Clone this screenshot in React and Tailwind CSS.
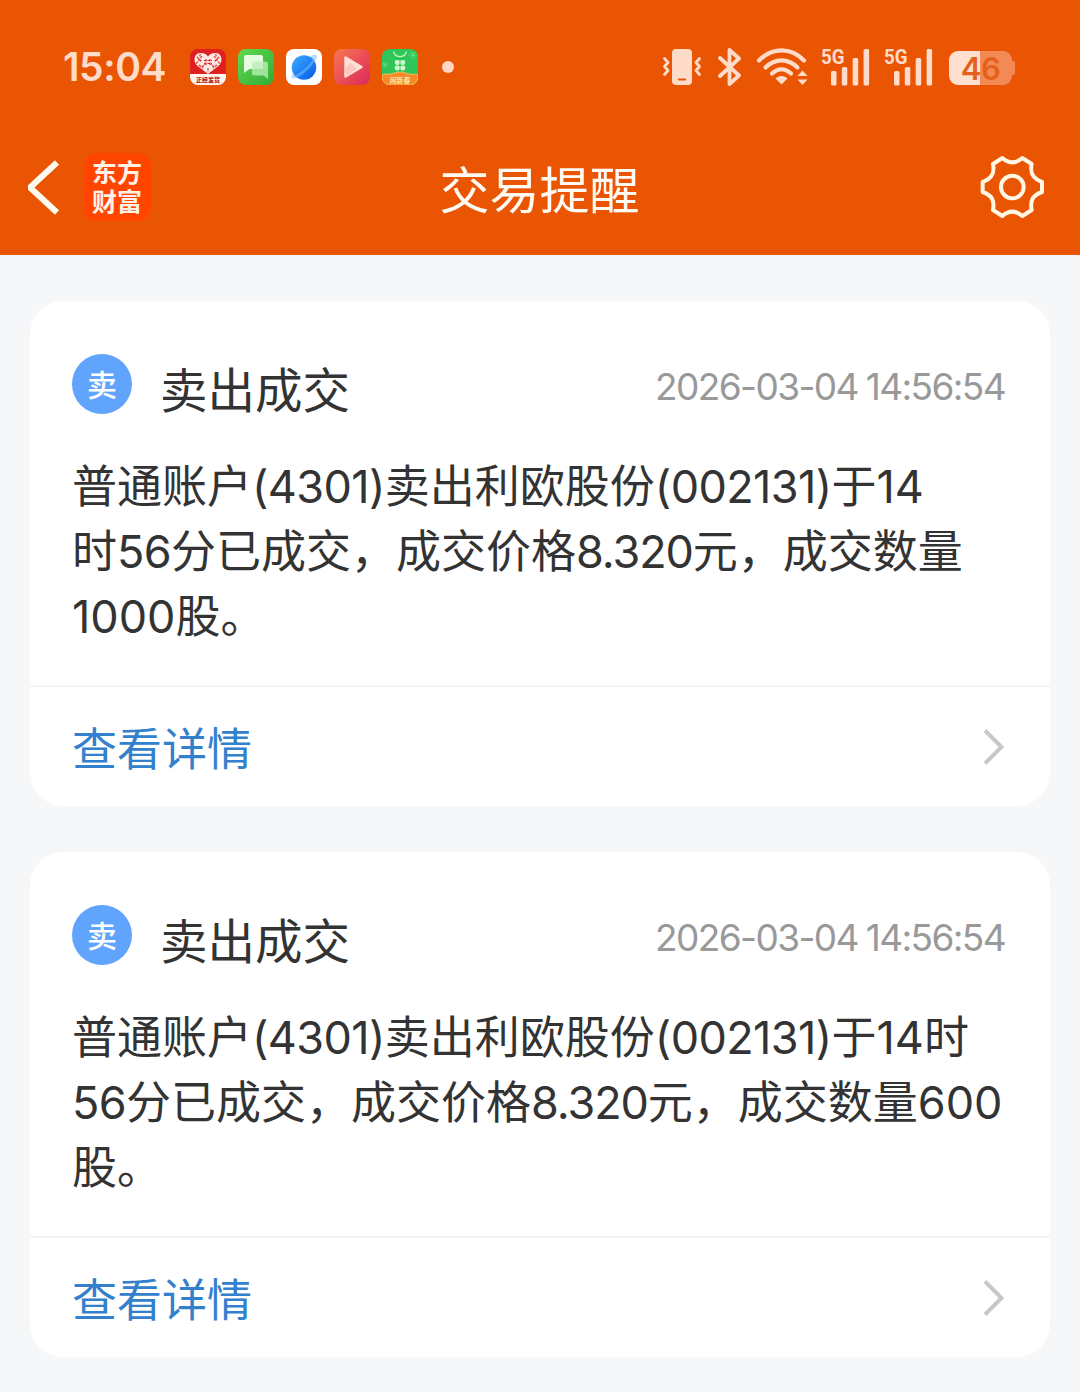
const notices = [
  {
    id: 1,
    title: "卖出成交",
    time: "2026-03-04 14:56:54",
    lines: [
      "普通账户(4301)卖出利欧股份(002131)于14",
      "时56分已成交，成交价格8.320元，成交数量",
      "1000股。",
    ],
  },
  {
    id: 2,
    title: "卖出成交",
    time: "2026-03-04 14:56:54",
    lines: [
      "普通账户(4301)卖出利欧股份(002131)于14时",
      "56分已成交，成交价格8.320元，成交数量600",
      "股。",
    ],
  },
];

export default function App() {
  return (
    <div className="h-[1392px] w-[1080px] overflow-hidden bg-[#f6f7f9] font-['Inter','Noto_Sans_CJK_SC',sans-serif]">
      <header className="h-[255px] bg-[#ea5504]">
        <StatusBar />
        <NavBar />
      </header>

      <main className="flex flex-col gap-[46px] px-[30px] pt-[46px]">
        {notices.map((notice) => (
          <NoticeCard key={notice.id} notice={notice} />
        ))}
      </main>
    </div>
  );
}

function StatusBar() {
  return (
    <div className="flex h-[134px] items-center pl-[63px] pr-[65px] text-[#ffdcc9]">
      <span className="w-[127px] pb-0.5 text-[39px] leading-none font-semibold tracking-[-0.4px]">15:04</span>
      <div className="flex items-center gap-3">
        <HeartAppIcon />
        <ChatAppIcon />
        <PlanetAppIcon />
        <VideoAppIcon />
        <CloverAppIcon />
      </div>
      <span className="ml-6 h-3 w-3 rounded-full bg-[#ffd6c3]" />

      <div className="ml-auto flex items-center">
        <VibrateIcon />
        <BluetoothIcon />
        <WifiIcon />
        <SignalIcon />
        <SignalIcon />
        <Battery />
      </div>
    </div>
  );
}

function HeartAppIcon() {
  return (
    <svg className="h-9 w-9" viewBox="0 0 36 36">
      <rect width="36" height="36" rx="8" fill="#e02020" />
      <path d="M0 25h36v3a8 8 0 01-8 8H8a8 8 0 01-8-8z" fill="#fff6f0" />
      <path
        d="M18 25L6.500 16C3 12 4 4 10.500 4 14 4 16.500 5 18 7.500 19.500 5 22 4 25.500 4 32 4 33 12 29.500 16z"
        fill="#ffe9e4"
      />
      <path
        d="M7 8l5 5M12 7l-6 8M29 8l-5 5M24 7l6 8M12 18l3-3M24 18l-3-3M18 19v4M16 10v6M20 10v6M14 11.500h8M14 14.500h8M9 16l4 3M27 16l-4 3M10 5v3M26 5v3"
        fill="none"
        stroke="#e02020"
        strokeWidth="1.100"
        strokeDasharray="2.500 1"
      />
      <text x="18" y="33" textAnchor="middle" fontSize="6" fontWeight="800" fill="#b52318">
        正经发货
      </text>
    </svg>
  );
}

function ChatAppIcon() {
  return (
    <svg className="h-9 w-9" viewBox="0 0 36 36">
      <defs>
        <linearGradient id="chat" x1="0" y1="0" x2="1" y2="1">
          <stop stopColor="#61d94e" />
          <stop offset="1" stopColor="#30ac36" />
        </linearGradient>
      </defs>
      <rect width="36" height="36" rx="8" fill="url(#chat)" />
      <path d="M16 12.500h12a2 2 0 012 2V30l-4.500-3.500H16a2 2 0 01-2-2v-10a2 2 0 012-2z" fill="#a0e39a" />
      <path d="M8 6h15a2 2 0 012 2v10a2 2 0 01-2 2H11.500L6 24V8a2 2 0 012-2z" fill="#e5fae0" />
      <path d="M14 14.500a2 2 0 012-2h9V18a2 2 0 01-2 2h-9z" fill="#c5efbf" />
    </svg>
  );
}

function PlanetAppIcon() {
  return (
    <svg className="h-9 w-9" viewBox="0 0 36 36">
      <defs>
        <linearGradient id="planet" x1="0" y1="0" x2="1" y2="1">
          <stop stopColor="#3cacff" />
          <stop offset="1" stopColor="#0759e8" />
        </linearGradient>
      </defs>
      <rect width="36" height="36" rx="8" fill="#fff" />
      <path d="M24 8C27 5 30 5 31 7 32.500 11 12 31 7 29.500 4.500 29 5.500 26 8 23z" fill="#b4dcff" />
      <circle cx="18" cy="18.500" r="12.200" fill="url(#planet)" />
      <path d="M28.500 12C26 17 18 25 11 28.500L9 27C16 23 24 15 27 10.500z" fill="#6dbcff" opacity=".6" />
    </svg>
  );
}

function VideoAppIcon() {
  return (
    <svg className="h-9 w-9" viewBox="0 0 36 36">
      <defs>
        <linearGradient id="video" x1="0" y1="0" x2="1" y2="1">
          <stop stopColor="#f87852" />
          <stop offset="1" stopColor="#dc285b" />
        </linearGradient>
      </defs>
      <rect width="36" height="36" rx="8" fill="url(#video)" />
      <path d="M11.500 8.500v19L27.500 18z" fill="#ffe0d6" stroke="#ffe0d6" strokeWidth="2.500" strokeLinejoin="round" />
      <path d="M11 20l6-6 6 6-10.500 7z" fill="#f9b8ad" opacity=".6" />
    </svg>
  );
}

function CloverAppIcon() {
  return (
    <svg className="h-9 w-9" viewBox="0 0 36 36">
      <rect width="36" height="36" rx="8" fill="#2ec65a" />
      <path
        d="M0 26c3-2 6 0 9-1s6-2 9-2 6 1 9 2 6-1 9 1v2a8 8 0 01-8 8H8a8 8 0 01-8-8z"
        fill="#f58a28"
        stroke="#ffc65c"
        strokeWidth=".8"
      />
      <path d="M11.500 2.500a6.700 6.700 0 0013 0" fill="none" stroke="#b6f3b4" strokeWidth="1.300" />
      <g fill="#d1f6cc">
        <rect x="12.800" y="11" width="4.900" height="4.900" rx="1.800" />
        <rect x="18.300" y="11" width="4.900" height="4.900" rx="1.800" />
        <rect x="12.800" y="16.500" width="4.900" height="4.900" rx="1.800" />
        <rect x="18.300" y="16.500" width="4.900" height="4.900" rx="1.800" />
      </g>
      <path
        d="M3 13v6M0 16h6M1 14l4 4M5 14l-4 4M31 3v7M27 6h8M28 3l6 6M34 3l-6 6"
        stroke="#82e490"
        strokeWidth=".8"
        strokeDasharray="1.500 1"
      />
      <text x="18" y="33.500" textAnchor="middle" fontSize="6.800" fontWeight="700" fill="#ffe6ad">
        闹新春
      </text>
    </svg>
  );
}

function VibrateIcon() {
  return (
    <svg className="h-[38px] w-[40px]" viewBox="0 0 40 38" fill="none">
      <rect x="10" y="1" width="20" height="36" rx="4" fill="currentColor" />
      <path d="M17 31.500h6" stroke="#ea5504" strokeWidth="2.200" strokeLinecap="round" />
      <path
        d="M2.500 10.500l3.500 4-3.500 4 3.500 4-3.500 4M37.500 10.500l-3.500 4 3.500 4-3.500 4 3.500 4"
        stroke="currentColor"
        strokeWidth="2.800"
        strokeLinecap="round"
        strokeLinejoin="round"
      />
    </svg>
  );
}

function BluetoothIcon() {
  return (
    <svg className="ml-[15px] h-[38px] w-[26px]" viewBox="0 0 26 38" fill="none">
      <path
        d="M3 10l19 17.500-9.500 8.500V2l9.500 8.500L3 28"
        stroke="currentColor"
        strokeWidth="3.800"
        strokeLinecap="round"
        strokeLinejoin="round"
      />
    </svg>
  );
}

function WifiIcon() {
  return (
    <svg className="mr-px ml-[13px] h-[38px] w-[52px]" viewBox="0 0 52 38" fill="none">
      <path d="M3 12.500C16-1 35-1 48 12.500" stroke="currentColor" strokeWidth="4.200" strokeLinecap="round" />
      <path d="M9.500 19.500c9.500-9.500 22.500-9.500 32 0" stroke="currentColor" strokeWidth="4.200" strokeLinecap="round" />
      <path d="M16 25.500c6-5.500 13-5.500 19 0" stroke="currentColor" strokeWidth="4.200" strokeLinecap="round" />
      <path d="M19.500 30.500c3-3.500 9-3.500 12 0L25.500 36.500z" fill="currentColor" />
      <path d="M46.500 22.500l5 5.500h-10zM46.500 37l5-5.500h-10z" fill="currentColor" />
    </svg>
  );
}

function SignalIcon() {
  return (
    <svg className="ml-[12px] h-[38px] w-[51px] overflow-visible" viewBox="0 0 51 38">
      <text
        x="0"
        y="15.500"
        fontSize="20"
        fontWeight="700"
        textLength="23.500"
        lengthAdjust="spacingAndGlyphs"
        fill="currentColor"
        fontFamily="Roboto"
      >
        5G
      </text>
      <g fill="currentColor">
        <rect x="10" y="23" width="5.500" height="14.500" rx="1.500" />
        <rect x="20.800" y="19" width="5.500" height="18.500" rx="1.500" />
        <rect x="31.700" y="10" width="5.500" height="27.500" rx="1.500" />
        <rect x="42.600" y="1" width="5.500" height="36.500" rx="1.500" />
      </g>
    </svg>
  );
}

function Battery() {
  return (
    <div className="ml-[14px] flex items-center pt-0.5">
      <div className="flex h-[34px] w-[63px] items-center justify-center rounded-[9px] bg-linear-to-r from-[#ffdfcf] from-49% to-[#f38a55] to-49% pt-0.5 text-[31px] leading-[32px] font-semibold tracking-[-0.5px] text-[#e5601a]">
        46
      </div>
      <div className="h-[14px] w-[3px] rounded-r-[2px] bg-[#f38a55]" />
    </div>
  );
}

function NavBar() {
  return (
    <div className="grid h-[106px] grid-cols-[1fr_auto_1fr] items-center pl-[26px] pr-[34px]">
      <div className="flex items-center gap-[23px]">
        <svg className="h-[56px] w-[34px]" viewBox="0 0 34 56" fill="none">
          <path d="M31 3.500L4 28.500 31 53.500" stroke="#fffaf0" strokeWidth="6" strokeLinejoin="bevel" />
        </svg>
        <div className="flex h-[68px] w-[68px] flex-col items-center justify-center rounded-[14px] bg-[#ff4500] pt-0.5 text-[25px] leading-[29px] font-bold text-[#fff3e8]">
          <span>东方</span>
          <span>财富</span>
        </div>
      </div>
      <h1 className="pt-[7px] pl-[7px] text-[50px] leading-none text-[#fffaf3]">交易提醒</h1>
      <svg
        className="h-[64px] w-[68px] justify-self-end"
        viewBox="54 44 204 192"
        fill="none"
        stroke="#fff6e4"
        strokeWidth="12"
        strokeLinejoin="round"
      >
        <path d="M127 53Q157 79 187 53L215 71C210 96 216 114 246 125V155C216 166 210 182 215 209L187 227Q157 201 127 227L99 209C104 182 98 166 68 155V125C98 114 104 96 99 71Z" />
        <circle cx="157" cy="140" r="34" />
      </svg>
    </div>
  );
}

function NoticeLine({ text }) {
  return (
    <p>
      {text.split(/([\d.()]+)/).map((part, i) => {
        if (part.includes(".")) {
          return <span key={i} className="tracking-[-1.1px]">{part}</span>;
        }
        if (part.includes("(")) {
          return <span key={i} className="tracking-[-0.6px]">{part}</span>;
        }
        if (part === "56") {
          return <span key={i} className="tracking-[-0.6px]">{part}</span>;
        }
        return part;
      })}
    </p>
  );
}

function NoticeCard({ notice }) {
  return (
    <section className="h-[505px] rounded-[33px] bg-white">
      <div className="h-[384px] px-[42px] pt-[53px]">
        <div className="flex h-[60px] items-center">
          <span className="flex h-[60px] w-[60px] items-center justify-center rounded-full bg-[#60a4fd] pt-0.5 text-[30px] leading-none font-medium text-white">
            卖
          </span>
          <h2 className="ml-[28px] pt-3.5 text-[47.500px] leading-[60px] text-[#333]">{notice.title}</h2>
          <time className="ml-auto pt-1.5 pr-[3px] text-[37px] leading-[60px] tracking-[-1.600px] [word-spacing:-1px] whitespace-nowrap text-[#999]">
            {notice.time}
          </time>
        </div>
        <div className="mt-[40px] text-[45px] leading-[65px] whitespace-nowrap text-[#333]">
          {notice.lines.map((line) => (
            <NoticeLine key={line} text={line} />
          ))}
        </div>
      </div>
      <a className="flex h-[121px] items-center justify-between border-t-2 border-[#f4f4f5] pl-[42px] pr-[45px] text-[45px] leading-none text-[#3380cc]">
        <span className="pt-1.5">查看详情</span>
        <svg className="h-[38px] w-[23px]" viewBox="0 0 23 38" fill="none">
          <path d="M3 2.500L19.500 19 3 35.500" stroke="#c8c8ca" strokeWidth="4" />
        </svg>
      </a>
    </section>
  );
}
